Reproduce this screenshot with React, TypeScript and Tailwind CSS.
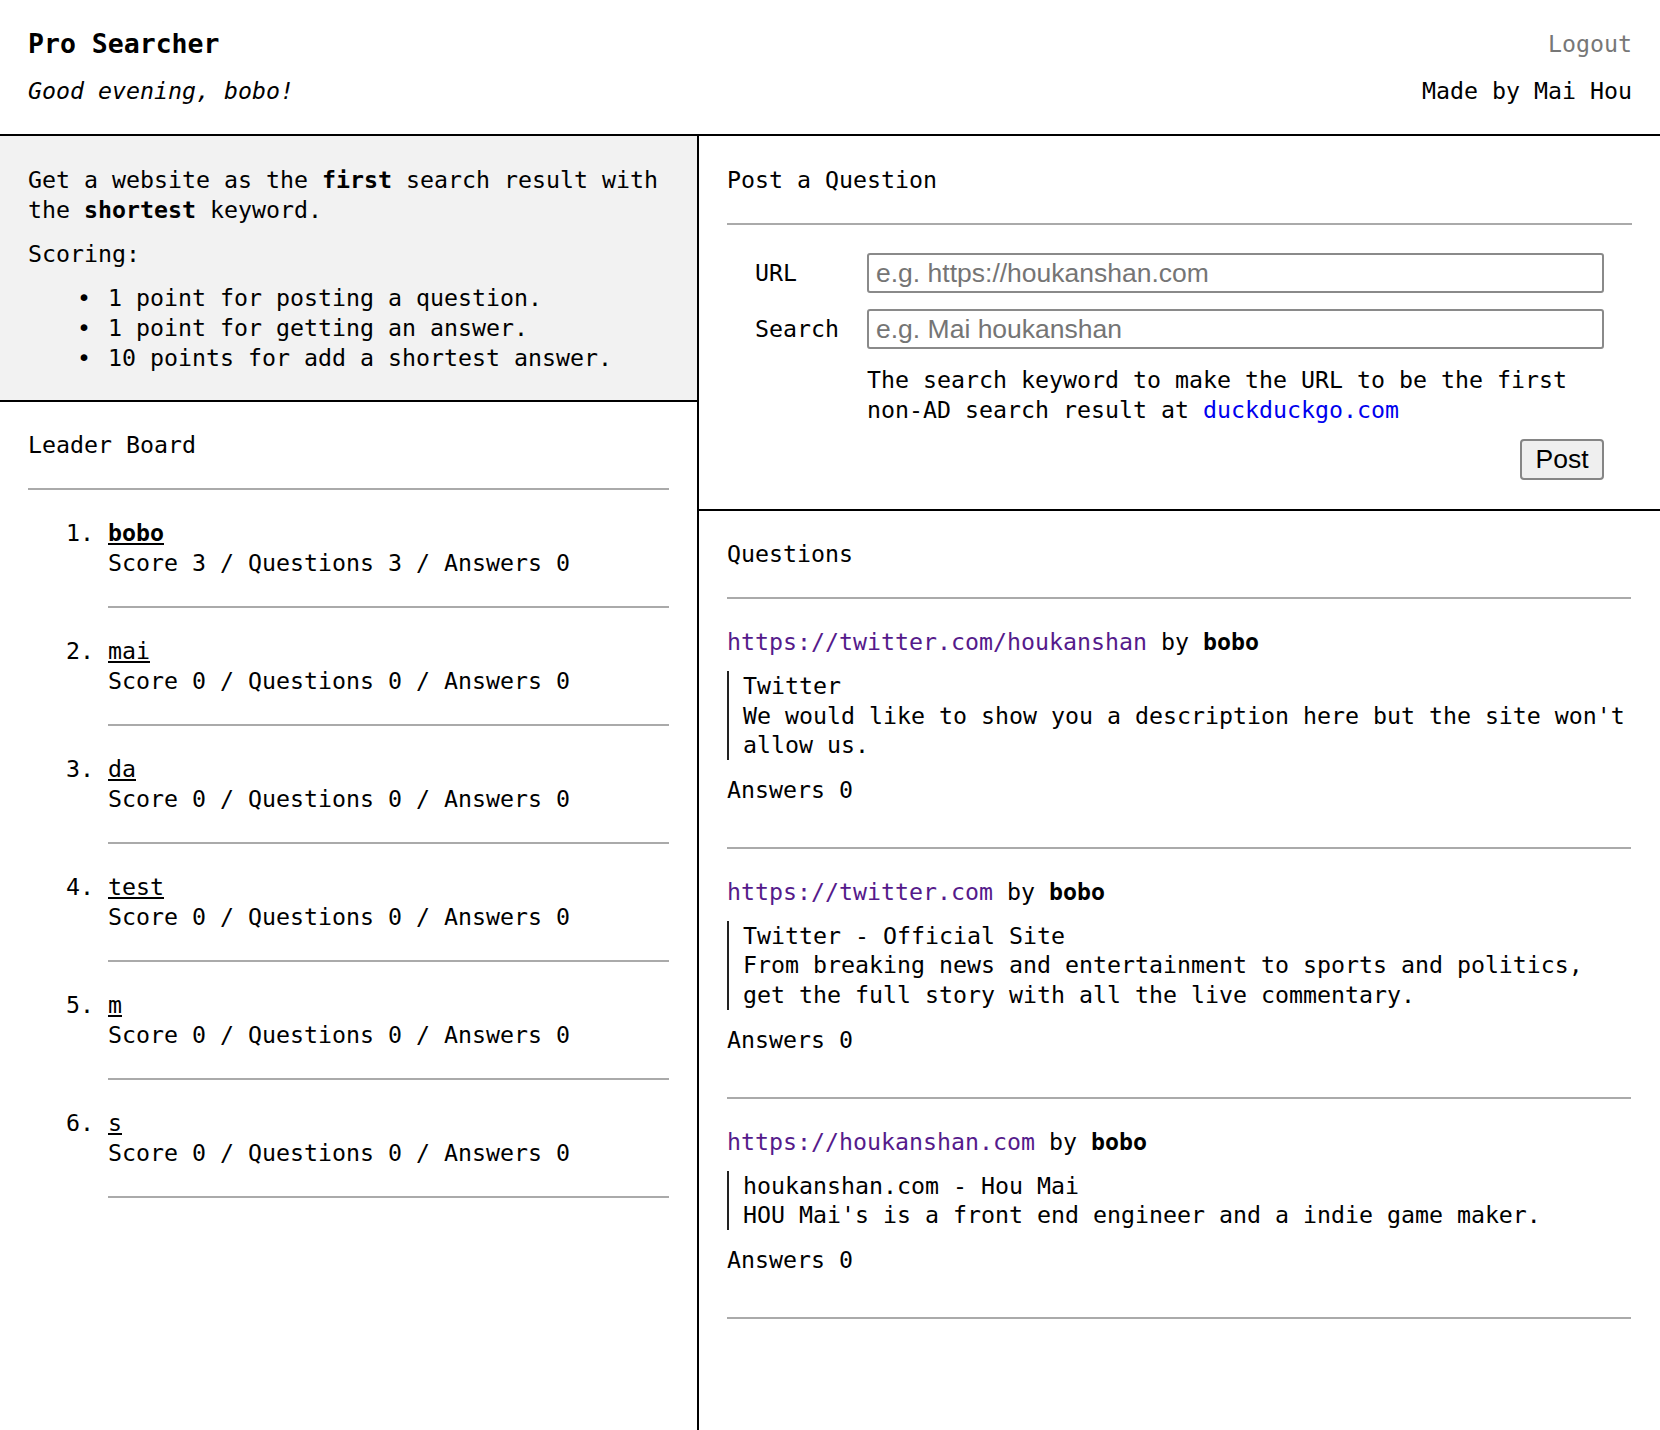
import React from "react"

const leaders = [
  { name: "bobo", score: 3, questions: 3, answers: 0, me: true },
  { name: "mai", score: 0, questions: 0, answers: 0 },
  { name: "da", score: 0, questions: 0, answers: 0 },
  { name: "test", score: 0, questions: 0, answers: 0 },
  { name: "m", score: 0, questions: 0, answers: 0 },
  { name: "s", score: 0, questions: 0, answers: 0 },
]

const questions = [
  {
    url: "https://twitter.com/houkanshan",
    by: "bobo",
    title: "Twitter",
    desc: "We would like to show you a description here but the site won't allow us.",
    answers: 0,
  },
  {
    url: "https://twitter.com",
    by: "bobo",
    title: "Twitter - Official Site",
    desc: "From breaking news and entertainment to sports and politics, get the full story with all the live commentary.",
    answers: 0,
  },
  {
    url: "https://houkanshan.com",
    by: "bobo",
    title: "houkanshan.com - Hou Mai",
    desc: "HOU Mai's is a front end engineer and a indie game maker.",
    answers: 0,
  },
]

const rules = [
  "1 point for posting a question.",
  "1 point for getting an answer.",
  "10 points for add a shortest answer.",
]

function Rule({ className = "" }: { className?: string }) {
  return <div className={`border-t-2 border-[#aaaaaa] ${className}`} />
}

function Header() {
  return (
    <header className="flex justify-between border-b-2 border-black px-[28px] pt-[29px] pb-[28px]">
      <div>
        <h1 className="text-[26.5px] font-bold">Pro Searcher</h1>
        <p className="mt-[17px] italic">Good evening, bobo!</p>
      </div>
      <div className="text-right">
        <a className="text-[#777777]">Logout</a>
        <p className="mt-[17px]">Made by Mai Hou</p>
      </div>
    </header>
  )
}

function Intro() {
  return (
    <section className="border-b-2 border-black bg-[#f2f2f2] px-[28px] pt-[29px] pb-[27px]">
      <p>
        Get a website as the <b>first</b> search result with the{" "}
        <b>shortest</b> keyword.
      </p>
      <p className="mt-[14px]">Scoring:</p>
      <ul className="mt-[14px] pl-[49px]">
        {rules.map((r) => (
          <li key={r} className="flex">
            <span className="w-[31px] shrink-0">•</span>
            <span>{r}</span>
          </li>
        ))}
      </ul>
    </section>
  )
}

function LeaderBoard() {
  return (
    <section className="px-[28px] pt-[28px]">
      <h2>Leader Board</h2>
      <Rule className="mt-[28px]" />
      <ol className="mt-[28px] list-decimal pl-[80px]">
        {leaders.map((u) => (
          <li key={u.name}>
            <a className={`underline ${u.me ? "font-bold" : ""}`}>{u.name}</a>
            <div>
              Score {u.score} / Questions {u.questions} / Answers {u.answers}
            </div>
            <Rule className="mt-[28px] mb-[28px]" />
          </li>
        ))}
      </ol>
    </section>
  )
}

function PostForm() {
  return (
    <section className="border-b-2 border-black px-[28px] pt-[29px] pb-[29px]">
      <h2>Post a Question</h2>
      <Rule className="mt-[28px]" />
      <form className="mt-[28px] grid grid-cols-[auto_1fr] items-center gap-x-[28px] gap-y-[16px] px-[28px]">
        <label>URL</label>
        <input
          placeholder="e.g. https://houkanshan.com"
          className="h-[40px] rounded-[3px] border-2 border-[#8a8a8a] px-[7px] font-['Liberation_Sans',Arial,sans-serif] text-[26.5px] placeholder:text-[#757575]"
        />
        <label>Search</label>
        <input
          placeholder="e.g. Mai houkanshan"
          className="h-[40px] rounded-[3px] border-2 border-[#8a8a8a] px-[7px] font-['Liberation_Sans',Arial,sans-serif] text-[26.5px] placeholder:text-[#757575]"
        />
        <div />
        <div>
          <p>
            The search keyword to make the URL to be the first non-AD search
            result at <a className="text-[#0000ee]">duckduckgo.com</a>
          </p>
          <div className="mt-[14px] flex justify-end">
            <button
              type="button"
              className="h-[41px] w-[84px] rounded-[4px] border-2 border-[#858585] bg-[#efefef] font-['Liberation_Sans',Arial,sans-serif] text-[26.5px] leading-none"
            >
              Post
            </button>
          </div>
        </div>
      </form>
    </section>
  )
}

function Questions() {
  return (
    <section className="pr-[29px] pl-[28px] pt-[28px]">
      <h2>Questions</h2>
      <Rule className="mt-[28px]" />
      {questions.map((q) => (
        <div key={q.url} className="pt-[28px]">
          <div>
            <a className="text-[#551a8b]">{q.url}</a> by <b>{q.by}</b>
          </div>
          <blockquote className="mt-[14px] border-l-2 border-[#222222] pl-[14px] leading-[29.6px]">
            <div>{q.title}</div>
            <div>{q.desc}</div>
          </blockquote>
          <p className="mt-[15px]">Answers {q.answers}</p>
          <Rule className="mt-[42px]" />
        </div>
      ))}
    </section>
  )
}

export default function App() {
  return (
    <div className="flex h-screen flex-col bg-white font-['DejaVu_Sans_Mono',monospace] text-[23.25px] leading-[30px] text-black">
      <Header />
      <main className="flex flex-1">
        <aside className="w-[699px] shrink-0 border-r-2 border-black">
          <Intro />
          <LeaderBoard />
        </aside>
        <div className="flex-1">
          <PostForm />
          <Questions />
        </div>
      </main>
    </div>
  )
}
